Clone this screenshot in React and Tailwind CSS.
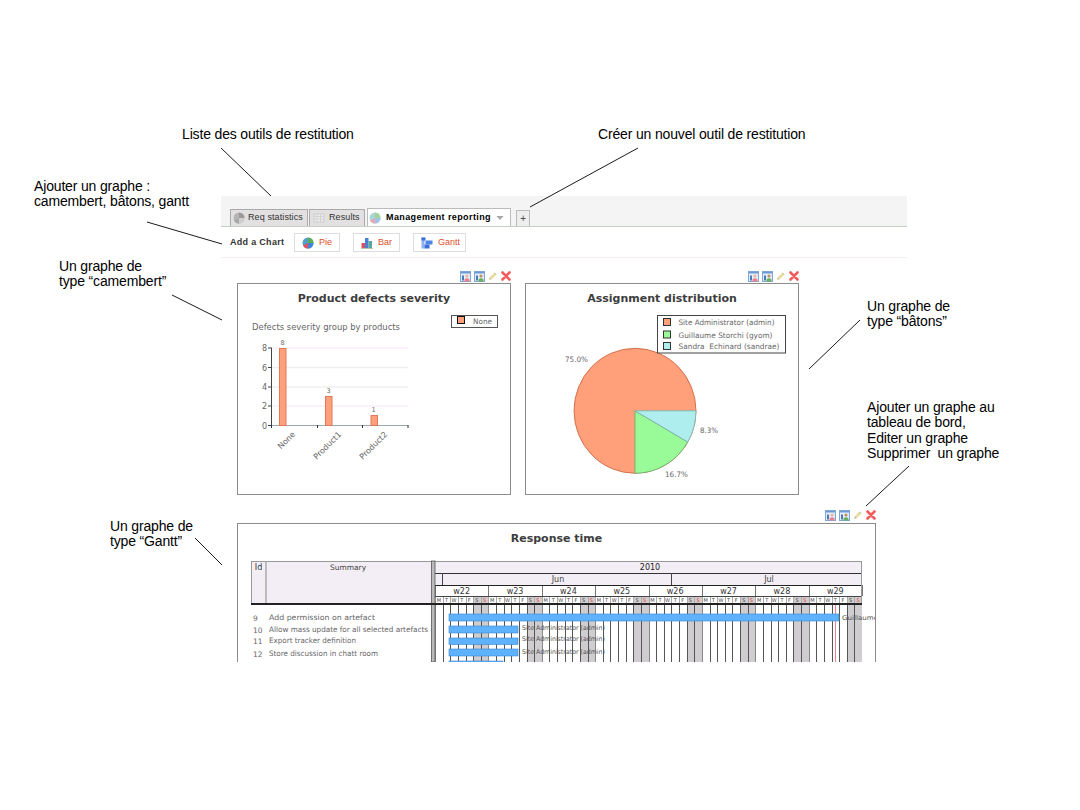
import React from "react";

const Note = ({ className, children }) => (
  <div className={`absolute whitespace-pre font-['Liberation_Sans',Arial,sans-serif] text-[14px] leading-[15.4px] tracking-[-0.16px] text-black ${className}`}>{children}</div>
);

const PieIcon = ({ grey, pale }) => (
  <svg width="12" height="12" viewBox="0 0 12 12" className="shrink-0">
    <circle cx="6" cy="6" r="5.500" fill={grey ? "#b5b5b5" : pale ? "#a9d6d6" : "#4f9fc8"} />
    <path d="M6 6V.5A5.500 5.500 0 0 1 11.500 6Z" fill={grey ? "#9a9a9a" : pale ? "#a4d39a" : "#5cad52"} />
    <path d="M6 6h5.500A5.500 5.500 0 0 1 6 11.500Z" fill={grey ? "#cfcfcf" : pale ? "#9fc4ea" : "#3f86d8"} />
    <path d="M6 6v5.500A5.500 5.500 0 0 1 1 8.500Z" fill={grey ? "#a8a8a8" : pale ? "#eca6ac" : "#e0505e"} />
  </svg>
);
const TableIcon = () => (
  <svg width="12" height="12" viewBox="0 0 12 12" className="shrink-0">
    <rect x="1" y="2" width="10" height="8" fill="#eee" stroke="#ccc" />
    <path d="M1 4.500h10M1 7h10M4 2v8M7.500 2v8" stroke="#d2d2d2" strokeWidth="1" />
  </svg>
);
const BarIcon = () => (
  <svg width="12" height="12" viewBox="0 0 12 12" className="shrink-0">
    <rect x="0.500" y="6" width="3.500" height="5" fill="#e0505a" />
    <rect x="4" y="1" width="3.500" height="10" fill="#4a7fd8" />
    <rect x="7.500" y="4" width="3.500" height="7" fill="#58a8a0" />
    <rect x="0" y="11" width="12" height="1" fill="#b8c8a8" />
  </svg>
);
const GanttIcon = () => (
  <svg width="12" height="12" viewBox="0 0 12 12" className="shrink-0">
    <rect x="0.500" y="0.500" width="3" height="11" fill="#8fb2ee" />
    <rect x="0.500" y="0.500" width="4" height="3" fill="#3a70d8" />
    <rect x="4.500" y="3.500" width="7" height="4" fill="#4f86e4" />
    <rect x="3.500" y="7.500" width="5" height="4" fill="#3a70d8" />
  </svg>
);
const ToolA = ({ accent }) => (
  <svg width="11" height="11" viewBox="0 0 11 11" className="shrink-0">
    <rect x="0.500" y="0.500" width="10" height="10" fill="#e4edf9" stroke="#7ea6d6" />
    <rect x="1" y="1" width="9" height="1.500" fill="#6c9bd4" />
    <rect x="2" y="4.500" width="2" height="5" fill="#4a7cbc" />
    <circle cx="7" cy="5" r="1.600" fill={accent ? "#c09060" : "#eab89a"} />
    <path d="M4.500 10.500V8.500Q7 6 9.500 8.500V10.500Z" fill={accent ? "#6cae5a" : "#ee7f8e"} />
  </svg>
);
const Pencil = () => (
  <svg width="10" height="10" viewBox="0 0 10 10" className="shrink-0">
    <path d="M1.500 8.500l.7-2.300 4.500-4.500 1.600 1.600-4.500 4.500Z" fill="#ecdf9e" stroke="#d6c98a" strokeWidth="0.500" />
    <path d="M1.500 8.500l.4-1.300L2.800 8.100Z" fill="#888" />
    <path d="M6.700 1.700l1.600 1.600-.8.800-1.600-1.600Z" fill="#c4d4a8" />
  </svg>
);
const Cross = () => (
  <svg width="10" height="10" viewBox="0 0 10 10" className="shrink-0">
    <path d="M1.500 1.500L8.500 8.500M8.500 1.500L1.500 8.500" stroke="#f45c5c" strokeWidth="2.600" strokeLinecap="round" />
  </svg>
);
const Toolbar = () => (
  <div className="flex h-[12px] items-start justify-end gap-[3px]">
    <ToolA />
    <ToolA accent />
    <Pencil />
    <Cross />
  </div>
);

const Tab = ({ className, icon, children }) => (
  <div className={`flex items-center border border-b-0 font-['Liberation_Sans',Arial,sans-serif] text-[9px] whitespace-nowrap ${className}`}>
    {icon}
    {children}
  </div>
);
const ChartButton = ({ className, icon, label }) => (
  <div className={`flex h-[19px] items-center gap-[5px] border border-[#ddd] bg-white pl-[7px] font-['Liberation_Sans',Arial,sans-serif] text-[9px] text-[#e0502c] ${className}`}>
    {icon}
    {label}
  </div>
);

const T = ({ x, y, w, size = 8, fill = "#666", anchor, bold, children, ...rest }) => (
  <text x={x} y={y} fontSize={size} fill={fill} textAnchor={anchor} fontWeight={bold ? 700 : 400} textLength={w} lengthAdjust={w ? "spacingAndGlyphs" : undefined} {...rest}>
    {children}
  </text>
);

const BarChart = () => (
  <svg width="272" height="183" viewBox="238 311 272 183" className="block">
    <T x="252" y="330" w="148" size="9">Defects severity group by products</T>
    <rect x="451.500" y="315.500" width="46" height="12" fill="#fff" stroke="#555" />
    <rect x="457.500" y="316.500" width="7" height="7" fill="#ffa07a" stroke="#111" />
    <T x="473" y="323.500" w="19" size="7.500">None</T>
    {[348, 367.500, 387, 406].map((y, i) => (
      <line key={y} x1="272" x2="408" y1={y} y2={y} stroke={i % 3 === 0 ? "#f3e8f3" : "#efefef"} strokeWidth={i % 3 === 0 ? 1 : 1.500} />
    ))}
    {[["8", 348], ["6", 367.500], ["4", 387], ["2", 406], ["0", 425.500]].map(([l, y]) => (
      <g key={l}>
        <T x="262" y={y + 3} size="8">{l}</T>
        <line x1="268" x2="272" y1={y} y2={y} stroke="#444" />
      </g>
    ))}
    <line x1="271.500" x2="271.500" y1="348" y2="426" stroke="#444" />
    <line x1="271" x2="408.500" y1="425.500" y2="425.500" stroke="#9aa" />
    {[271.500, 317.500, 362.500, 408].map((x) => (
      <line key={x} x1={x} x2={x} y1="425" y2="428" stroke="#333" />
    ))}
    {[[279, 348, "8", 282.500, 345], [325, 396, "3", 328.500, 393], [370.500, 415, "1", 373.500, 412]].map(([x, y, l, lx, ly]) => (
      <g key={l}>
        <rect x={x + 0.500} y={y + 0.500} width="6.500" height={425 - y} fill="#ffa07a" stroke="#e07a5a" />
        <T x={lx} y={ly} size="6.500" anchor="middle">{l}</T>
      </g>
    ))}
    {[["None", 293], ["Product1", 339], ["Product2", 385]].map(([l, x]) => (
      <T key={l} x={x} y="436" size="8" anchor="end" transform={`rotate(-45 ${x} 432)`}>{l}</T>
    ))}
  </svg>
);

const PieChart = () => (
  <svg width="272" height="183" viewBox="526 311 272 183" className="block">
    <ellipse cx="635" cy="410.800" rx="61" ry="62.500" fill="#ffa07a" stroke="#c8603a" strokeWidth="0.800" />
    <path d="M635 410.800L687.800 442A61 62.500 0 0 1 635 473.300Z" fill="#98fb98" stroke="#6aa870" strokeWidth="0.800" />
    <path d="M635 410.800H696A61 62.500 0 0 1 687.800 442Z" fill="#afeeee" stroke="#78b0a8" strokeWidth="0.800" />
    <rect x="657.500" y="315.500" width="128" height="37.500" fill="#fff" stroke="#444" />
    {[["#ffa07a", 318.500, "Site Administrator (admin)", 96], ["#98fb98", 331, "Guillaume Storchi (gyom)", 94], ["#afeeee", 342.500, "Sandra  Echinard (sandrae)", 101]].map(([c, y, l, w]) => (
      <g key={l}>
        <rect x="663.500" y={y} width="7" height="7" fill={c} stroke="#333" />
        <T x="678.500" y={y + 6.500} w={w} size="7.500" xmlSpace="preserve">{l}</T>
      </g>
    ))}
    <T x="565" y="362" w="23" size="7.500">75.0%</T>
    <T x="700" y="433" w="18" size="7.500">8.3%</T>
    <T x="665" y="477" w="23" size="7.500">16.7%</T>
  </svg>
);

const DAY = 7.625;
const WEEK = DAY * 7;
const X0 = 435;
const dx = (d) => Math.round(X0 + d * DAY);
const DAYS = Array.from({ length: 56 }, (_, i) => i);
const LETTERS = ["M", "T", "W", "T", "F", "S", "S"];
const ROWS = [
  ["9", "Add permission on artefact", 618, 106],
  ["10", "Allow mass update for all selected artefacts", 630, 159],
  ["11", "Export tracker definition", 641, 87],
  ["12", "Store discussion in chatt room", 654, 109],
];
const BARS = [
  [449, 839, 614, 7],
  [449, 518, 626, 7],
  [449, 518, 638, 6.500],
  [449, 518, 649, 7],
  [449, 503, 661, 6],
];

const Gantt = () => (
  <svg width="637" height="112" viewBox="238 550 637 112" className="block">
    <rect x="251" y="561" width="611" height="43" fill="#f3eef5" />
    <rect x={X0} y="585" width="427" height="19" fill="#fff" />
    {DAYS.filter((d) => d % 7 > 4).map((d) => (
      <rect key={d} x={dx(d)} y="596" width={dx(d + 1) - dx(d)} height="66" fill="#cfcdcf" />
    ))}
    {DAYS.map((d) => (
      <g key={d}>
        <line x1={dx(d) + 0.500} x2={dx(d) + 0.500} y1="596" y2="603" stroke="#aaa" />
        <line x1={dx(d) + 0.500} x2={dx(d) + 0.500} y1="604" y2="662" stroke={d % 7 === 0 ? "#888" : "#555"} />
        <T x={X0 + d * DAY + DAY / 2} y="602" size="5" anchor="middle" fill={d % 7 === 6 ? "#ee3333" : "#444"}>{LETTERS[d % 7]}</T>
      </g>
    ))}
    <line x1="835.500" x2="835.500" y1="604" y2="662" stroke="#f0808a" />
    {BARS.map(([a, b, y, h]) => (
      <rect key={y} x={a} y={y} width={b - a} height={h} fill="#5fb2ff" stroke="#3a86cc" strokeWidth="0.600" />
    ))}
    {[630, 641, 654].map((y) => (
      <T key={y} x="522" y={y} w="83" size="6.500" fill="#555">Site Administrator (admin)</T>
    ))}
    <T x="842" y="620" w="36" size="6.500" fill="#555">Guillaume</T>
    {Array.from({ length: 9 }, (_, i) => (
      <line key={i} x1={dx(i * 7) + 0.500} x2={dx(i * 7) + 0.500} y1="585" y2="596" stroke="#777" />
    ))}
    {["w22", "w23", "w24", "w25", "w26", "w27", "w28", "w29"].map((w, i) => (
      <T key={w} x={X0 + (i + 0.500) * WEEK} y="594" size="8" anchor="middle" fill="#333">{w}</T>
    ))}
    <line x1={X0} x2="862" y1="573.500" y2="573.500" stroke="#333" />
    <line x1={X0} x2="862" y1="585.500" y2="585.500" stroke="#222" />
    <line x1={X0} x2="862" y1="596.500" y2="596.500" stroke="#444" />
    <line x1="442.500" x2="442.500" y1="573" y2="585" stroke="#444" />
    <line x1="671.500" x2="671.500" y1="573" y2="585" stroke="#444" />
    <T x="650" y="570" size="8" anchor="middle" fill="#222">2010</T>
    <T x="558" y="582" size="8" anchor="middle" fill="#444">Jun</T>
    <T x="769" y="582" size="8" anchor="middle" fill="#444">Jul</T>
    <rect x="251.500" y="561.500" width="610" height="43" fill="none" stroke="#999" />
    <line x1="266" x2="266" y1="561" y2="604" stroke="#aaa" strokeWidth="1.500" />
    <T x="258.500" y="570" size="8" anchor="middle" fill="#333">Id</T>
    <T x="348" y="570" size="7.500" anchor="middle" fill="#444">Summary</T>
    <rect x="431.500" y="561" width="3.500" height="101" fill="#bbb" stroke="#555" strokeWidth="0.800" />
    <rect x="251" y="603" width="611" height="2" fill="#222" />
    {ROWS.map(([id, s, y, w]) => (
      <g key={id}>
        <T x="253" y={y + 3} size="7.500">{id}</T>
        <T x="269" y={y + 2} w={w} size="7.500">{s}</T>
      </g>
    ))}
  </svg>
);

const ChartBox = ({ title, className, children }) => (
  <div className={`flex w-[274px] flex-col ${className}`}>
    <Toolbar />
    <div className="h-[212px] border border-[#8c8c8c] bg-white">
      <div className="pt-[9px] text-center text-[11px] leading-[12px] font-bold text-[#3d3d3d]">{title}</div>
      <div className="pt-[6px]">{children}</div>
    </div>
  </div>
);

export default function App() {
  return (
    <div className="relative h-[810px] w-[1080px] overflow-hidden bg-white font-['DejaVu_Sans',sans-serif]">
      <div className="flex h-[662px] flex-col overflow-hidden pt-[196px]">
        <div className="ml-[221px] w-[686px]">
          <div className="flex h-[31px] items-end gap-[1px] border-b border-[#c4d0c4] bg-[#f4f4f4] pl-[9px]">
            <Tab className="h-[17px] w-[78px] gap-[3px] border-[#aaa] bg-[#e2e0e0] pl-[2px] tracking-[0.1px] text-[#333]" icon={<PieIcon grey />}>Req statistics</Tab>
            <Tab className="h-[17px] w-[56px] gap-[4px] border-[#aaa] bg-[#e2e0e0] pl-[3px] tracking-[0.1px] text-[#333]" icon={<TableIcon />}>Results</Tab>
            <Tab className="ml-[1px] h-[18px] w-[144px] gap-[5px] border-[#bbb] bg-white pl-[1px] font-bold tracking-[0.4px] text-black" icon={<PieIcon pale />}>
              <span>Management reporting</span>
              <svg width="8" height="4" viewBox="0 0 9 5" className="shrink-0"><path d="M0 0h9L4.500 5Z" fill="#a8a8a8" /></svg>
            </Tab>
            <div className="ml-[4px] flex h-[16px] w-[14px] items-center justify-center border border-b-0 border-[#bbb] bg-[#eee] text-[8px] text-[#333]">+</div>
          </div>
          <div className="flex h-[31px] items-start border-b border-[#f8ecf4] pt-[6px] pl-[9px]">
            <span className="mt-[3px] w-[64px] font-['Liberation_Sans',Arial,sans-serif] text-[9px] leading-[12px] font-bold tracking-[0.3px] text-[#333]">Add a Chart</span>
            <ChartButton className="w-[46px]" icon={<PieIcon />} label="Pie" />
            <ChartButton className="ml-[13px] w-[47px]" icon={<BarIcon />} label="Bar" />
            <ChartButton className="ml-[13px] w-[53px]" icon={<GanttIcon />} label="Gantt" />
          </div>
        </div>
        <div className="mt-[13px] ml-[237px] flex gap-[14px]">
          <ChartBox title="Product defects severity"><BarChart /></ChartBox>
          <ChartBox title="Assignment distribution"><PieChart /></ChartBox>
        </div>
        <div className="mt-[15px] ml-[237px] w-[639px]">
          <Toolbar />
          <div className="mt-[1px] border border-b-0 border-[#8c8c8c] bg-white">
            <div className="h-[26px] pt-[9px] text-center text-[11px] leading-[12px] font-bold text-[#3d3d3d]">Response time</div>
            <Gantt />
          </div>
        </div>
      </div>

      <svg width="1080" height="810" viewBox="0 0 1080 810" className="pointer-events-none absolute top-0 left-0">
        {[[221, 148, 271, 196], [638, 148, 530, 207], [147, 222, 222, 244], [172, 295, 222, 320], [860, 320, 809, 369], [909, 466, 866, 506], [195, 538, 222, 565]].map(([a, b, c, d]) => (
          <line key={a} x1={a} y1={b} x2={c} y2={d} stroke="#000" strokeWidth="0.900" />
        ))}
      </svg>

      <Note className="top-[127px] left-[182px]">Liste des outils de restitution</Note>
      <Note className="top-[127px] left-[598px]">Créer un nouvel outil de restitution</Note>
      <Note className="top-[179px] left-[34px]">{"Ajouter un graphe :\ncamembert, bâtons, gantt"}</Note>
      <Note className="top-[259px] left-[59px]">{"Un graphe de\ntype “camembert”"}</Note>
      <Note className="top-[299px] left-[867px]">{"Un graphe de\ntype “bâtons”"}</Note>
      <Note className="top-[400px] left-[867px]">{"Ajouter un graphe au\ntableau de bord,\nEditer un graphe\nSupprimer  un graphe"}</Note>
      <Note className="top-[519px] left-[110px]">{"Un graphe de\ntype “Gantt”"}</Note>
    </div>
  );
}
